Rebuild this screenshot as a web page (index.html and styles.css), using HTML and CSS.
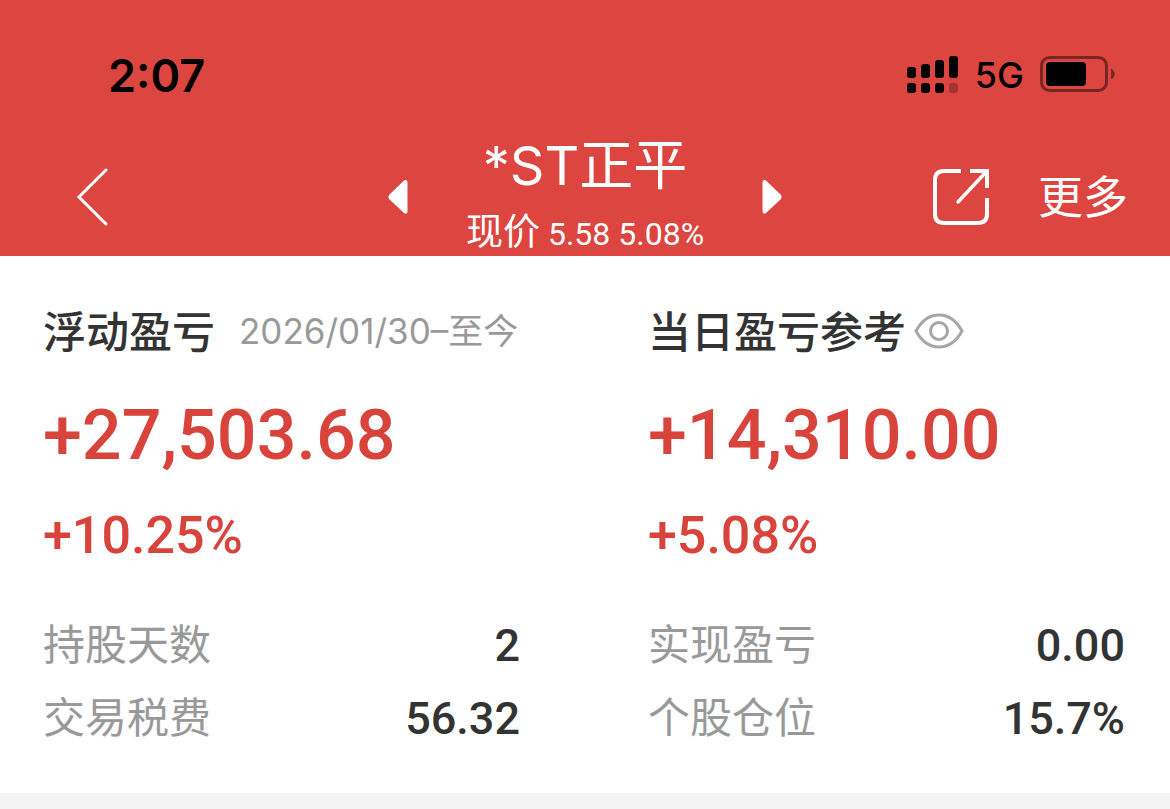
FILE: index.html
```html
<!DOCTYPE html>
<html lang="zh-CN">
<head>
    <meta charset="UTF-8">
    <meta name="viewport" content="width=device-width, initial-scale=1.0">
    <title>*ST正平</title>
    <link rel="stylesheet" href="styles.css">
</head>
<body>
    <header class="header">
        <div class="status-bar">
            <span class="time">2:07</span>
            <div class="status-icons">
                <svg class="signal" width="52" height="38" viewBox="0 0 52 38">
                    <rect x="0" y="11" width="9" height="11" rx="3"/>
                    <rect x="14" y="8" width="9" height="14" rx="3"/>
                    <rect x="28" y="4" width="9" height="18" rx="3"/>
                    <rect x="42" y="0" width="9" height="22" rx="3"/>
                    <rect x="0" y="27" width="9" height="10" rx="3"/>
                    <rect x="14" y="27" width="9" height="10" rx="3"/>
                    <rect x="28" y="27" width="9" height="10" rx="3"/>
                    <rect x="42" y="27" width="9" height="10" rx="3" opacity="0.25"/>
                </svg>
                <span class="network">5G</span>
                <svg class="battery" width="76" height="36" viewBox="0 0 76 36">
                    <rect x="1.5" y="1.5" width="65" height="33" rx="8" fill="none" stroke="#000" stroke-width="3" opacity="0.45"/>
                    <path d="M71 12.500C76 15 76 21 71 23.500Z" opacity="0.45"/>
                    <rect x="6" y="6" width="40" height="24" rx="4"/>
                </svg>
            </div>
        </div>

        <nav class="nav-bar">
            <button class="icon-btn back-btn" aria-label="返回">
                <svg width="34" height="60" viewBox="0 0 34 60">
                    <path d="M31 3L4 30L31 57" fill="none" stroke="#fff" stroke-width="3" stroke-linecap="round"/>
                </svg>
            </button>
            <div class="stock">
                <button class="icon-btn" aria-label="上一只">
                    <svg width="20" height="36" viewBox="0 0 20 36">
                        <path d="M16 1.500Q19.500 0 19.500 4V32Q19.500 36 16 34L1.500 20.500Q-.5 18 1.500 15.500Z" fill="#fff"/>
                    </svg>
                </button>
                <div class="stock-info">
                    <h1>*ST正平</h1>
                    <p class="price"><span>现价</span><span class="price-num">5.58 5.08%</span></p>
                </div>
                <button class="icon-btn" aria-label="下一只">
                    <svg width="20" height="36" viewBox="0 0 20 36">
                        <path d="M4 1.500Q.5 0 .5 4V32Q.5 36 4 34L18.500 20.500Q20.500 18 18.500 15.500Z" fill="#fff"/>
                    </svg>
                </button>
            </div>
            <div class="actions">
                <button class="icon-btn" aria-label="分享">
                    <svg width="58" height="58" viewBox="0 0 58 58" fill="none" stroke="#fff" stroke-width="4">
                        <path d="M29 3H12Q3 3 3 12V46Q3 55 12 55H46Q55 55 55 46V30"/>
                        <path d="M38 3H55V20"/>
                        <path d="M54 4L26 34" stroke-width="3.500" stroke-linecap="round"/>
                    </svg>
                </button>
                <button class="more-btn">更多</button>
            </div>
        </nav>
    </header>

    <main class="summary">
        <section class="panel">
            <div class="panel-title">
                <h2>浮动盈亏</h2>
                <span class="date-range">2026/01/30–至今</span>
            </div>
            <p class="amount">+27,503.68</p>
            <p class="percent">+10.25%</p>
            <dl class="details">
                <div class="detail-row"><dt>持股天数</dt><dd>2</dd></div>
                <div class="detail-row"><dt>交易税费</dt><dd>56.32</dd></div>
            </dl>
        </section>

        <section class="panel">
            <div class="panel-title">
                <h2>当日盈亏参考</h2>
                <button class="icon-btn eye-btn" aria-label="隐藏金额">
                    <svg width="50" height="36" viewBox="0 0 50 36" fill="none" stroke="#a6a6a6" stroke-width="3">
                        <path d="M2 18C8 7 16 2 25 2S42 7 48 18C42 29 34 34 25 34S8 29 2 18Z"/>
                        <circle cx="25" cy="18" r="8.500"/>
                    </svg>
                </button>
            </div>
            <p class="amount">+14,310.00</p>
            <p class="percent">+5.08%</p>
            <dl class="details">
                <div class="detail-row"><dt>实现盈亏</dt><dd>0.00</dd></div>
                <div class="detail-row"><dt>个股仓位</dt><dd>15.7%</dd></div>
            </dl>
        </section>
    </main>
</body>
</html>
```
FILE: styles.css
```css
* {
    box-sizing: border-box;
}

body {
    margin: 0;
    min-height: 100vh;
    background-color: #f4f4f4;
    color: #333;
    font-family: Inter, "Noto Sans CJK SC", sans-serif;
}

h1, h2, p, dl, dd {
    margin: 0;
}

button {
    padding: 0;
    border: none;
    background: none;
    font-family: inherit;
    cursor: pointer;
}

svg {
    display: block;
}

.header {
    background-color: #dd4540;
    color: #fff;
}

.status-bar {
    display: flex;
    justify-content: space-between;
    align-items: center;
    height: 136px;
    padding: 14px 54px 0 108px;
    color: #000;
}

.time {
    font-size: 45px;
    font-weight: 600;
}

.status-icons {
    display: flex;
    align-items: center;
    gap: 16px;
}

.network {
    font-size: 36px;
    font-weight: 500;
}

.battery {
    margin-bottom: 2px;
}

.nav-bar {
    display: grid;
    grid-template-columns: 1fr auto 1fr;
    align-items: center;
    height: 120px;
    padding: 0 42px;
}

.back-btn {
    justify-self: start;
    margin-left: 33px;
}

.stock {
    display: flex;
    align-items: center;
    justify-content: space-between;
    width: 394px;
}

.stock-info {
    text-align: center;
    white-space: nowrap;
}

.stock-info h1 {
    font-size: 54px;
    font-weight: 400;
    line-height: 60px;
}

.price {
    display: flex;
    align-items: baseline;
    justify-content: center;
    gap: 8px;
    padding-top: 12px;
    font-size: 37px;
    line-height: 48px;
}

.price-num {
    font-family: Roboto, sans-serif;
    font-size: 32px;
}

.actions {
    display: flex;
    align-items: center;
    justify-self: end;
    gap: 48px;
}

.more-btn {
    padding-bottom: 6px;
    color: #fff;
    font-size: 45px;
    white-space: nowrap;
}

.summary {
    display: grid;
    grid-template-columns: 1fr 1fr;
    gap: 128px;
    padding: 43px 45px 38px 43px;
    background-color: #fff;
}

.panel-title {
    display: flex;
    align-items: center;
    height: 64px;
    white-space: nowrap;
}

.panel-title h2 {
    padding-bottom: 4px;
    font-size: 43px;
    font-weight: 500;
}

.date-range {
    margin-left: 24px;
    padding-bottom: 6px;
    color: #999;
    font-size: 35px;
}

.eye-btn {
    margin-left: 8px;
}

.amount,
.percent {
    color: #d8433b;
    font-family: Roboto, sans-serif;
    font-weight: 500;
}

.amount {
    margin-top: 27px;
    font-size: 70px;
    line-height: 90px;
}

.percent {
    margin-top: 26px;
    font-size: 52px;
    line-height: 60px;
}

.details {
    margin-top: 43px;
}

.detail-row {
    display: flex;
    justify-content: space-between;
    align-items: center;
    height: 73px;
}

.detail-row dt {
    padding-bottom: 8px;
    color: #999;
    font-size: 42px;
}

.detail-row dd {
    font-family: Roboto, sans-serif;
    font-size: 45px;
    font-weight: 500;
}
```
